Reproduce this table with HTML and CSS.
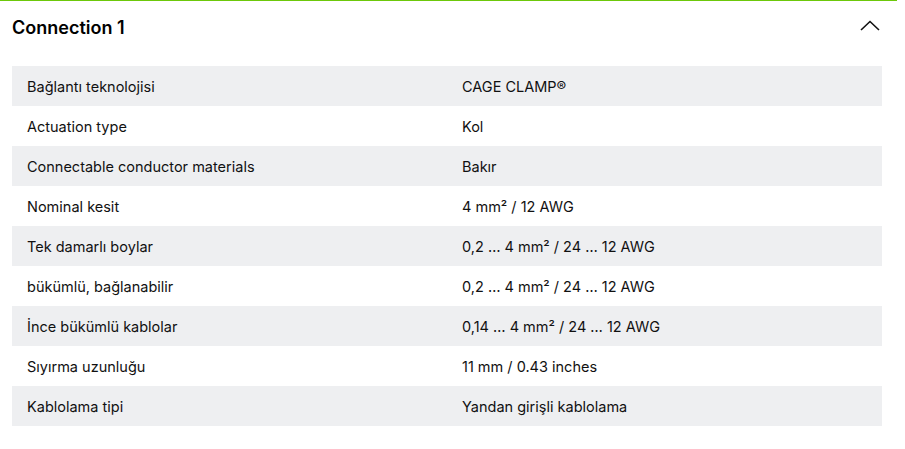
FILE: index.html
```html
<!DOCTYPE html>
<html lang="tr">
<head>
<meta charset="utf-8">
<link rel="stylesheet" href="styles.css">
</head>
<body>
<section class="panel">
  <header class="panel-head">
    <h2 class="panel-title">Connection 1</h2>
    <svg class="chevron" width="20" height="11" viewBox="0 0 20 11" aria-hidden="true"><path d="M1 10 L10 1.5 L19 10" fill="none" stroke="#111" stroke-width="1.6"/></svg>
  </header>
  <table class="specs">
    <tbody>
      <tr><td>Bağlantı teknolojisi</td><td>CAGE CLAMP®</td></tr>
      <tr><td>Actuation type</td><td>Kol</td></tr>
      <tr><td>Connectable conductor materials</td><td>Bakır</td></tr>
      <tr><td>Nominal kesit</td><td>4 mm² / 12 AWG</td></tr>
      <tr><td>Tek damarlı boylar</td><td>0,2 … 4 mm² / 24 … 12 AWG</td></tr>
      <tr><td>bükümlü, bağlanabilir</td><td>0,2 … 4 mm² / 24 … 12 AWG</td></tr>
      <tr><td>İnce bükümlü kablolar</td><td>0,14 … 4 mm² / 24 … 12 AWG</td></tr>
      <tr><td>Sıyırma uzunluğu</td><td>11 mm / 0.43 inches</td></tr>
      <tr><td>Kablolama tipi</td><td>Yandan girişli kablolama</td></tr>
    </tbody>
  </table>
</section>
</body>
</html>
```
FILE: styles.css
```css
html, body {
  margin: 0;
  padding: 0;
  background: #fff;
}
body {
  font-family: Inter, "Noto Sans", sans-serif;
  color: #111;
}
.panel {
  width: 897px;
  border-top: 1px solid #6cc80a;
  box-sizing: border-box;
  padding: 0 15px 0 12px;
}
.panel-head {
  height: 65px;
  display: flex;
  align-items: flex-start;
  justify-content: space-between;
  padding: 16px 3px 0 0;
  box-sizing: border-box;
}
.panel-title {
  margin: 0;
  font-size: 18px;
  line-height: 22px;
  font-weight: 600;
  color: #000;
}
.chevron {
  display: block;
  margin-right: -1px;
  margin-top: 3px;
}
.specs {
  width: 100%;
  border-collapse: collapse;
  table-layout: fixed;
  font-size: 14.5px;
}
.specs td {
  height: 40px;
  padding: 0 15px;
  box-sizing: border-box;
  vertical-align: middle;
}
.specs tr:nth-child(odd) td {
  background: #eeeff1;
}
```
